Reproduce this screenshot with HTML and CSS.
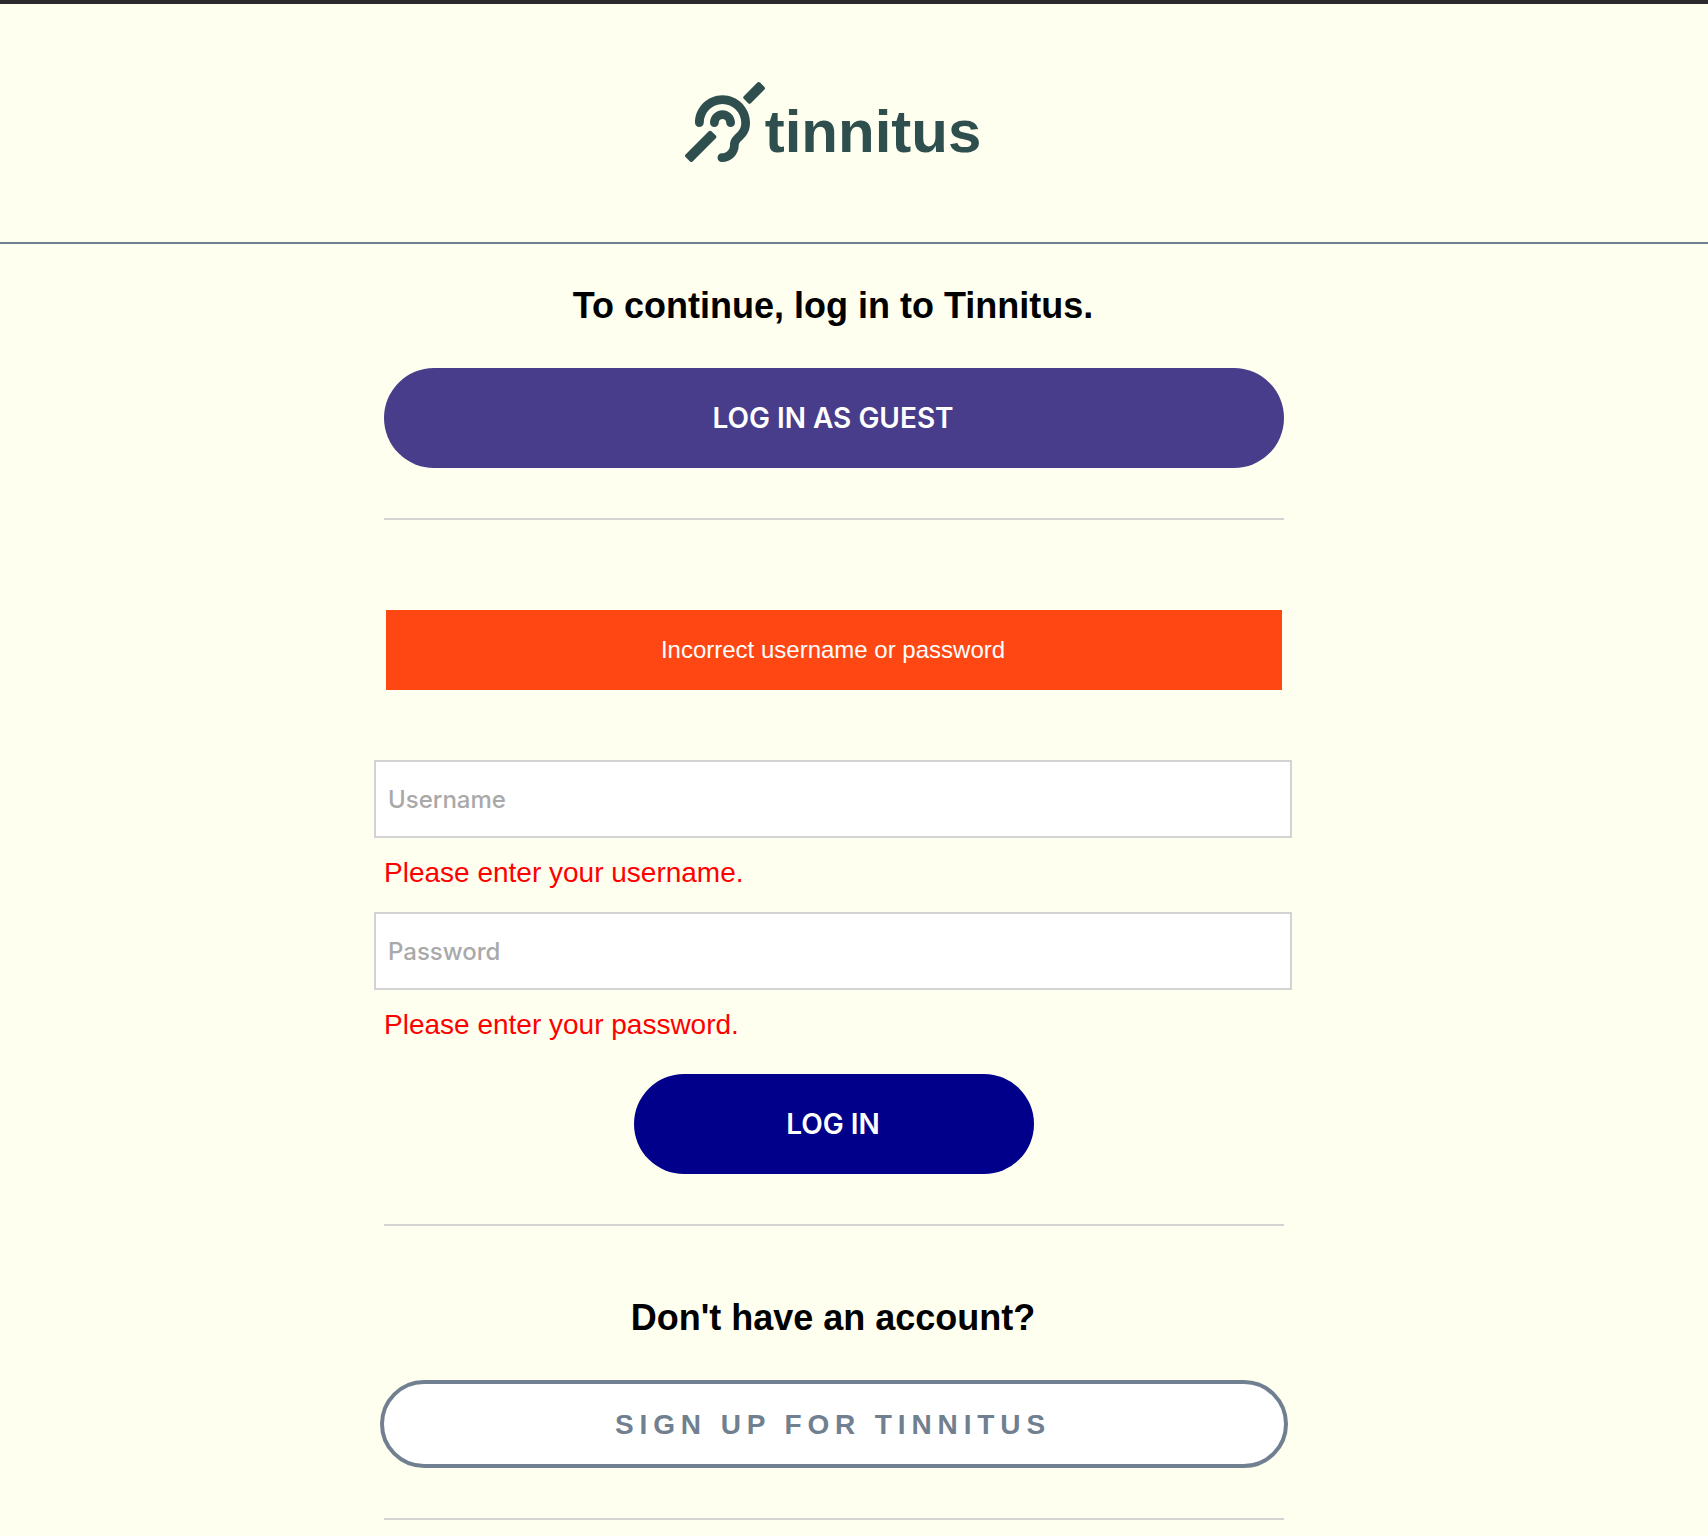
FILE: index.html
```html
<!DOCTYPE html>
<html lang="en">
<head>
<meta charset="utf-8">
<title>Log in - Tinnitus</title>
<link rel="stylesheet" href="styles.css">
</head>
<body>
<header class="header">
  <a class="logo">
    <svg class="logo-icon" viewBox="0 0 512 512" aria-hidden="true"><path fill="currentColor" d="M216 260c0 15.464-12.536 28-28 28s-28-12.536-28-28c0-44.112 35.888-80 80-80s80 35.888 80 80c0 15.464-12.536 28-28 28s-28-12.536-28-28c0-13.234-10.767-24-24-24s-24 10.766-24 24zm24-176c-97.047 0-176 78.953-176 176 0 15.464 12.536 28 28 28s28-12.536 28-28c0-66.168 53.832-120 120-120s120 53.832 120 120c0 75.164-71.009 70.311-71.997 143.622L288 404c0 28.673-23.327 52-52 52-15.464 0-28 12.536-28 28s12.536 28 28 28c59.475 0 107.876-48.328 108-107.774.595-34.428 72-48.24 72-144.226 0-97.047-78.953-176-176-176zm268.485-52.201L480.2 3.515c-4.687-4.686-12.284-4.686-16.971 0L376.2 90.544c-4.686 4.686-4.686 12.284 0 16.971l28.285 28.285c4.686 4.686 12.284 4.686 16.97 0l87.03-87.029c4.687-4.688 4.687-12.286 0-16.972zM168.97 314.745c-4.686-4.686-12.284-4.686-16.97 0L3.515 463.23c-4.686 4.686-4.686 12.284 0 16.971L31.8 508.485c4.687 4.686 12.284 4.686 16.971 0L197.256 360c4.686-4.686 4.686-12.284 0-16.971l-28.286-28.284z"/></svg>
    <span class="logo-text">tinnitus</span>
  </a>
</header>
<main class="main">
  <h1 class="title">To continue, log in to Tinnitus.</h1>
  <button class="btn btn-guest">LOG IN AS GUEST</button>
  <hr class="rule">
  <div class="alert">Incorrect username or password</div>
  <form class="form">
    <input class="field" type="text" placeholder="Username">
    <p class="error">Please enter your username.</p>
    <input class="field" type="password" placeholder="Password">
    <p class="error">Please enter your password.</p>
    <button class="btn btn-login" type="button">LOG IN</button>
  </form>
  <hr class="rule">
  <h2 class="title title-signup">Don't have an account?</h2>
  <a class="btn-signup">SIGN UP FOR TINNITUS</a>
  <hr class="rule">
</main>
</body>
</html>
```
FILE: styles.css
```css
* { box-sizing: border-box; }
html { overflow: hidden; }
body {
  margin: 0;
  height: 1536px;
  overflow: hidden;
  background: ivory;
  border-top: 4px solid #2b2a2c;
  font-family: "Liberation Sans", Arial, sans-serif;
}
.header {
  height: 240px;
  padding: 78px 42px 0 0;
  border-bottom: 2px solid slategray;
}
.logo {
  display: flex;
  justify-content: center;
  height: 80px;
  color: darkslategray;
}
.logo-icon { width: 80px; height: 80px; }
.logo-text {
  padding-top: 16px;
  font-size: 60px;
  font-weight: 700;
  line-height: 68px;
}
.main {
  display: flex;
  flex-direction: column;
  align-items: center;
  padding: 41px 40px 0 0;
}
.title {
  margin: 0 0 42px;
  padding-right: 2px;
  font-size: 36px;
  line-height: 41px;
  white-space: nowrap;
}
.title-signup { margin: 71px 0 42px; }
.btn {
  height: 100px;
  padding: 0 2px 0 0;
  border: 0;
  border-radius: 50px;
  color: white;
  font: 600 28px/100px Inter, sans-serif;
}
.btn-guest { width: 900px; background: darkslateblue; }
.btn-login { width: 400px; margin-top: 33px; background: darkblue; }
.rule {
  width: 900px;
  height: 2px;
  margin: 50px 0 0;
  border: 0;
  background: lightgray;
}
.alert {
  width: 896px;
  height: 80px;
  margin: 90px 0 70px;
  padding-right: 2px;
  background: #ff4713;
  color: white;
  font-size: 24px;
  line-height: 80px;
  text-align: center;
}
.form {
  display: flex;
  flex-direction: column;
  align-items: center;
}
.field {
  width: 918px;
  height: 78px;
  margin-right: 2px;
  padding: 0 12px;
  border: 2px solid lightgray;
  background: white;
  font: 500 24px Inter, sans-serif;
}
.field::placeholder { color: darkgray; opacity: 1; }
.error {
  align-self: flex-start;
  margin: 19px 0 23px 10px;
  color: red;
  font-size: 28px;
  line-height: 32px;
}
.error:last-of-type { margin-bottom: 0; }
.btn-signup {
  width: 908px;
  height: 88px;
  padding-right: 2px;
  border: 4px solid slategray;
  border-radius: 44px;
  background: white;
  color: slategray;
  font-size: 28px;
  font-weight: 700;
  line-height: 82px;
  letter-spacing: 5.88px;
  text-align: center;
}
```
